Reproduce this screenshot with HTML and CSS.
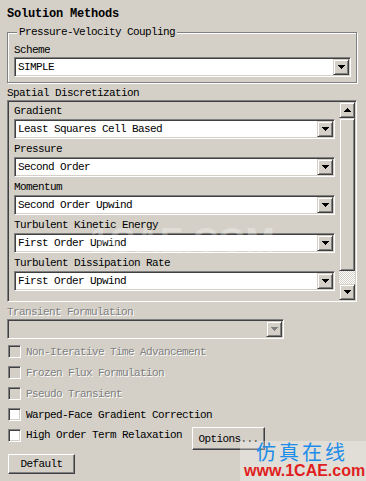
FILE: index.html
```html
<!DOCTYPE html>
<html lang="en">
<head>
    <meta charset="UTF-8">
    <title>Solution Methods</title>
    <link rel="stylesheet" href="styles.css">
</head>
<body>
<div class="title">Solution Methods</div>

<fieldset class="group">
    <legend>Pressure-Velocity Coupling</legend>
    <div class="label scheme">Scheme</div>
    <div class="combo">
        <span class="value">SIMPLE</span>
        <span class="drop"><svg width="7" height="4" viewBox="0 0 7 4"><path d="M0 0h7v1h-1v1h-1v1h-1v1h-1v-1h-1v-1h-1v-1h-1z"/></svg></span>
    </div>
</fieldset>

<div class="label section">Spatial Discretization</div>
<div class="panel">
    <div class="panel-content">
        <div class="label">Gradient</div>
        <div class="combo">
            <span class="value">Least Squares Cell Based</span>
            <span class="drop"><svg width="7" height="4" viewBox="0 0 7 4"><path d="M0 0h7v1h-1v1h-1v1h-1v1h-1v-1h-1v-1h-1v-1h-1z"/></svg></span>
        </div>
        <div class="label">Pressure</div>
        <div class="combo">
            <span class="value">Second Order</span>
            <span class="drop"><svg width="7" height="4" viewBox="0 0 7 4"><path d="M0 0h7v1h-1v1h-1v1h-1v1h-1v-1h-1v-1h-1v-1h-1z"/></svg></span>
        </div>
        <div class="label">Momentum</div>
        <div class="combo">
            <span class="value">Second Order Upwind</span>
            <span class="drop"><svg width="7" height="4" viewBox="0 0 7 4"><path d="M0 0h7v1h-1v1h-1v1h-1v1h-1v-1h-1v-1h-1v-1h-1z"/></svg></span>
        </div>
        <div class="label">Turbulent Kinetic Energy</div>
        <div class="combo">
            <span class="value">First Order Upwind</span>
            <span class="drop"><svg width="7" height="4" viewBox="0 0 7 4"><path d="M0 0h7v1h-1v1h-1v1h-1v1h-1v-1h-1v-1h-1v-1h-1z"/></svg></span>
        </div>
        <div class="label">Turbulent Dissipation Rate</div>
        <div class="combo">
            <span class="value">First Order Upwind</span>
            <span class="drop"><svg width="7" height="4" viewBox="0 0 7 4"><path d="M0 0h7v1h-1v1h-1v1h-1v1h-1v-1h-1v-1h-1v-1h-1z"/></svg></span>
        </div>
    </div>
    <div class="scrollbar">
        <span class="sb-btn"><svg width="7" height="4" viewBox="0 0 7 4"><path d="M3 0h1v1h1v1h1v1h1v1h-7v-1h1v-1h1v-1h1z"/></svg></span>
        <span class="sb-thumb"></span>
        <span class="sb-track"></span>
        <span class="sb-btn"><svg width="7" height="4" viewBox="0 0 7 4"><path d="M0 0h7v1h-1v1h-1v1h-1v1h-1v-1h-1v-1h-1v-1h-1z"/></svg></span>
    </div>
</div>

<div class="label section disabled transient">Transient Formulation</div>
<div class="combo disabled-combo">
    <span class="value"></span>
    <span class="drop"><svg width="7" height="4" viewBox="0 0 7 4"><path d="M0 0h7v1h-1v1h-1v1h-1v1h-1v-1h-1v-1h-1v-1h-1z"/></svg></span>
</div>

<div class="checks">
    <div class="check disabled"><span class="box"></span>Non-Iterative Time Advancement</div>
    <div class="check disabled"><span class="box"></span>Frozen Flux Formulation</div>
    <div class="check disabled"><span class="box"></span>Pseudo Transient</div>
    <div class="check"><span class="box"></span>Warped-Face Gradient Correction</div>
    <div class="check last"><span class="box"></span><span class="check-text">High Order Term Relaxation</span><button class="btn options">Options...</button></div>
</div>

<button class="btn default">Default</button>

<div class="wm-center">1CAE.COM</div>
<div class="wm">
    <div class="wm-cn">仿真在线</div>
    <div class="wm-url">www.1CAE.com</div>
</div>
</body>
</html>
```

FILE: styles.css
```css
:root {
    --face: #d4d0c8;
    --shadow: #808080;
    --dark: #404040;
    --light: #fff;
}
body {
    margin: 0;
    width: 366px;
    height: 481px;
    overflow: hidden;
    position: relative;
    background: var(--face);
    color: #000;
    font-family: "Liberation Mono", monospace;
    font-size: 11px;
    line-height: 14px;
    letter-spacing: -0.6px;
}
.title {
    margin: 7px 0 0 7px;
    font-weight: bold;
    font-size: 12px;
    letter-spacing: -0.2px;
}
.group {
    margin: 4px 0 0 7px;
    padding: 0 5px 5px 6px;
    width: 350px;
    box-sizing: border-box;
    min-inline-size: 0;
    border: 1px solid var(--shadow);
    box-shadow: inset 1px 1px var(--light), 1px 1px var(--light);
}
.group legend {
    margin-left: 3px;
    padding: 0 2px;
    background: var(--face);
    line-height: 14px;
}
.label {
    padding-top: 1px;
    margin: 2px 0 1px 0;
}
.scheme {
    padding-top: 2px;
    margin-bottom: 0;
}
.section {
    margin-left: 7px;
    margin-bottom: 0;
}
.combo {
    height: 20px;
    box-sizing: border-box;
    display: flex;
    align-items: center;
    padding: 0 1px 0 3px;
    background: #fff;
    border: 1px solid;
    border-color: var(--shadow) var(--light) var(--light) var(--shadow);
    box-shadow: inset 1px 1px var(--dark), inset -1px -1px var(--face);
}
.value {
    flex: 1;
    white-space: nowrap;
    overflow: hidden;
}
.drop, .sb-btn {
    width: 16px;
    height: 16px;
    box-sizing: border-box;
    display: flex;
    align-items: center;
    justify-content: center;
    background: var(--face);
    border: 1px solid;
    border-color: var(--face) var(--dark) var(--dark) var(--face);
    box-shadow: inset 1px 1px var(--light), inset -1px -1px var(--shadow);
}
.drop svg, .sb-btn svg {
    display: block;
    fill: #000;
}
.panel {
    margin: 0 0 0 7px;
    width: 350px;
    height: 202px;
    box-sizing: border-box;
    padding: 1px;
    display: flex;
    border: 1px solid;
    border-color: var(--shadow) var(--light) var(--light) var(--shadow);
    box-shadow: inset 1px 1px var(--dark), inset -1px -1px var(--face);
    overflow: hidden;
}
.panel-content {
    flex: 1;
    padding: 1px 4px 0 5px;
}
.panel-content .label {
    margin: 0 0 1px 0;
}
.panel-content .combo {
    margin-bottom: 2px;
}
.scrollbar {
    width: 16px;
    display: flex;
    flex-direction: column;
}
.sb-btn {
    flex: none;
}
.sb-thumb {
    height: 153px;
    box-sizing: border-box;
    background: var(--face);
    border: 1px solid;
    border-color: var(--face) var(--dark) var(--dark) var(--face);
    box-shadow: inset 1px 1px var(--light), inset -1px -1px var(--shadow);
}
.sb-track {
    flex: 1;
    background-image: conic-gradient(#fff 25%, var(--face) 0 50%, #fff 0 75%, var(--face) 0);
    background-size: 2px 2px;
}
.disabled {
    color: var(--shadow);
    text-shadow: 1px 1px 0 var(--light);
}
.transient {
    margin-top: 2px;
    margin-bottom: 0;
}
.disabled-combo {
    margin-left: 7px;
    width: 277px;
    background: var(--face);
}
.disabled-combo .drop svg {
    fill: var(--shadow);
}
.checks {
    margin-top: 2px;
}
.check {
    display: flex;
    align-items: center;
    height: 21px;
    padding-left: 8px;
    white-space: nowrap;
}
.box {
    width: 13px;
    height: 13px;
    box-sizing: border-box;
    margin-right: 5px;
    flex: none;
    background: #fff;
    border: 1px solid;
    border-color: var(--shadow) var(--light) var(--light) var(--shadow);
    box-shadow: inset 1px 1px var(--dark), inset -1px -1px var(--face);
}
.check.disabled .box {
    background: var(--face);
}
.check.last {
    height: 24px;
    align-items: flex-start;
}
.check.last .box {
    margin-top: 4px;
}
.check-text {
    line-height: 21px;
}
.btn {
    padding: 0;
    height: 23px;
    box-sizing: border-box;
    background: var(--face);
    color: #000;
    font: inherit;
    letter-spacing: inherit;
    border: 1px solid;
    border-color: var(--light) var(--dark) var(--dark) var(--light);
    box-shadow: inset -1px -1px var(--shadow);
    border-radius: 0;
}
.options {
    margin: 2px 0 0 10px;
    width: 73px;
}
.default {
    display: block;
    margin: 5px 0 0 8px;
    width: 67px;
    height: 20px;
}
.wm-center {
    position: absolute;
    left: 90px;
    top: 222px;
    font-family: "Liberation Sans", sans-serif;
    font-weight: bold;
    font-size: 35px;
    line-height: 36px;
    letter-spacing: 0;
    color: rgba(255, 255, 255, 0.3);
    pointer-events: none;
}
.wm {
    position: absolute;
    right: 0;
    bottom: 0;
    width: 126px;
    height: 40px;
    background: rgba(255, 255, 255, 0.3);
    letter-spacing: 0;
    pointer-events: none;
}
.wm-cn {
    margin: 1px 0 0 16px;
    font-family: "Noto Sans CJK SC", sans-serif;
    font-size: 20px;
    line-height: 20px;
    letter-spacing: 3px;
    color: #1b8ce8;
}
.wm-url {
    margin-left: 4px;
    font-family: "Liberation Sans", sans-serif;
    font-weight: bold;
    font-size: 16px;
    line-height: 18px;
    color: #e01e1e;
}
```
